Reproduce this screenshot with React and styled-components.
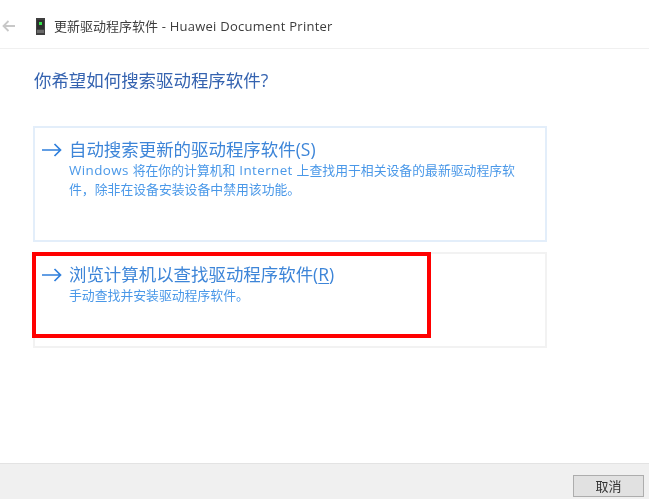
import React from "react";
import styled, { createGlobalStyle } from "styled-components";

const Global = createGlobalStyle`
  html, body { margin: 0; padding: 0; background: #fff; }
  body { font-family: "Open Sans", "Noto Sans CJK SC", sans-serif; }
`;
const Page = styled.div`
  width: 649px; height: 499px; display: flex; flex-direction: column; overflow: hidden; background: #fff;
`;
const Header = styled.header`
  height: 49px; flex: none; display: flex; align-items: center; padding: 4px 0 0 2px; box-sizing: border-box;
  border-bottom: 1px solid #f0f0f0;
`;
const Back = styled.svg`width: 13px; height: 12px; flex: none; margin-right: 21px;`;
const Device = styled.svg`width: 9px; height: 17px; flex: none; margin-right: 9px;`;
const WindowTitle = styled.span`
  font-size: 13px; color: #3c3c3c; white-space: nowrap; line-height: 18px; filter: blur(0.35px);
  em { font-style: normal; letter-spacing: 0.25px; }
`;
const Main = styled.main`
  flex: 1; display: flex; flex-direction: column; padding: 20px 102px 0 33px; min-height: 0;
`;
const Heading = styled.h1`
  margin: 0 0 34px 1px; font-size: 17.45px; font-weight: 400; line-height: 23px; color: #3563b0;
  white-space: nowrap; filter: blur(0.35px);
`;
const Card = styled.div`
  position: relative; box-sizing: border-box; height: ${p => p.$h}px; margin-bottom: ${p => p.$mb}px;
  border: 2px solid ${p => p.$line}; display: grid; grid-template-columns: 19px 1fr; column-gap: 8px;
  padding: ${p => p.$pt}px 23px 0 7px; align-content: start;
`;
const Arrow = styled.svg`width: 20px; height: 14px; margin-top: 5px;`;
const Title = styled.div`
  font-size: 17.45px; line-height: 23px; color: #3d85d8; white-space: nowrap; filter: blur(0.35px);
  u { text-underline-offset: 2px; }
`;
const Desc = styled.div`
  grid-column: 2; font-size: 12.85px; line-height: 19px; color: #4a98e8; white-space: nowrap; filter: blur(0.35px);
`;
const Latin = styled.span`
  font-size: 13.4px; letter-spacing: 0.4px;
`;
const Highlight = styled.div`
  position: absolute; left: -3px; top: -2px; width: 399px; height: 86px; box-sizing: border-box;
  border: 4px solid #ff0000;
`;
const Footer = styled.footer`
  height: 36px; box-sizing: border-box; flex: none; background: #f0f0f0; border-top: 1px solid #e3e3e3; display: flex;
  justify-content: flex-end; align-items: flex-end; padding: 0 5px 2px 0;
`;
const CancelButton = styled.button`
  width: 71px; height: 22px; box-sizing: border-box; padding: 0; background: #e1e1e1; border: 1px solid #adadad;
  font-family: inherit; font-size: 13px; color: #333; line-height: 18px;
  span { display: inline-block; filter: blur(0.35px); }
`;

const ArrowIcon = () => (
  <Arrow viewBox="0 0 20 14" fill="none" stroke="#2f7fdc" strokeWidth="1.7">
    <path d="M0 7H18.5M12.5 1L18.5 7L12.5 13" />
  </Arrow>
);

export default function App() {
  return (
    <Page>
      <Global />
      <Header>
        <Back viewBox="0 0 13 12" fill="none" stroke="#c8c8c8" strokeWidth="1.8">
          <path d="M13 6H1.5M6.5 1L1.5 6L6.5 11" />
        </Back>
        <Device viewBox="0 0 9 17">
          <rect width="9" height="17" fill="#3f3f3f" />
          <rect x="1" y="2" width="7" height="9" fill="#2e2e2e" />
          <rect x="1" y="12" width="7" height="3" fill="#6a6a6a" />
          <rect x="3" y="4" width="3" height="3" fill="#35e04a" />
        </Device>
        <WindowTitle>更新驱动程序软件<em> - Huawei Document Printer</em></WindowTitle>
      </Header>
      <Main>
        <Heading>你希望如何搜索驱动程序软件?</Heading>
        <Card $h={116} $mb={10} $pt={10} $line="#e3eefa">
          <ArrowIcon />
          <Title>自动搜索更新的驱动程序软件(S)</Title>
          <Desc>
            <Latin>Windows </Latin>将在你的计算机和<Latin> Internet </Latin>上查找用于相关设备的最新驱动程序软<br />
            件，除非在设备安装设备中禁用该功能。
          </Desc>
        </Card>
        <Card $h={96} $mb={0} $pt={9} $line="#f2f2f2">
          <ArrowIcon />
          <Title>浏览计算机以查找驱动程序软件(<u>R</u>)</Title>
          <Desc>手动查找并安装驱动程序软件。</Desc>
          <Highlight />
        </Card>
      </Main>
      <Footer>
        <CancelButton><span>取消</span></CancelButton>
      </Footer>
    </Page>
  );
}
